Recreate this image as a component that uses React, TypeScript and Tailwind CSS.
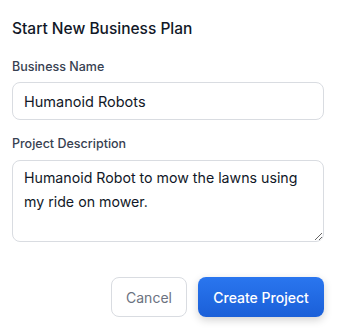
import React from "react";

export default function App() {
  return (
    <div className="w-[347px] h-[330px] bg-white" style={{ fontFamily: "Inter, 'Liberation Sans', sans-serif" }}>
      <div className="pl-3 pt-[17px] w-[324px]">
        <h2 className="text-[15.5px] leading-6 font-medium text-[#111827]">Start New Business Plan</h2>
        <div className="mt-[16px]">
          <label className="block text-[12.5px] leading-5 font-medium text-[#374151]">Business Name</label>
          <input
            className="mt-[5px] block w-full h-[38px] rounded-lg border border-[#d9dce1] px-[11px] text-[14.5px] text-[#111827] outline-none"
            defaultValue="Humanoid Robots"
          />
        </div>
        <div className="mt-[14px]">
          <label className="block text-[12.5px] leading-5 font-medium text-[#374151]">Project Description</label>
          <textarea
            className="mt-[6px] block w-full h-[82px] rounded-lg border border-[#d9dce1] px-[11px] py-[5px] text-[14.2px] leading-6 text-[#111827] outline-none resize-y"
            defaultValue="Humanoid Robot to mow the lawns using my ride on mower."
          />
        </div>
        <div className="mt-[35px] flex justify-end gap-[11px]">
          <button className="h-10 w-[76px] rounded-lg border border-[#d9dce1] bg-white text-[14px] text-[#6b7280]">
            Cancel
          </button>
          <button className="h-10 w-[126px] rounded-lg bg-gradient-to-b from-[#2a76ef] to-[#1a5fd8] text-[14px] font-medium text-white shadow-[0_3px_8px_rgba(0,0,0,0.18)]">
            Create Project
          </button>
        </div>
      </div>
    </div>
  );
}
